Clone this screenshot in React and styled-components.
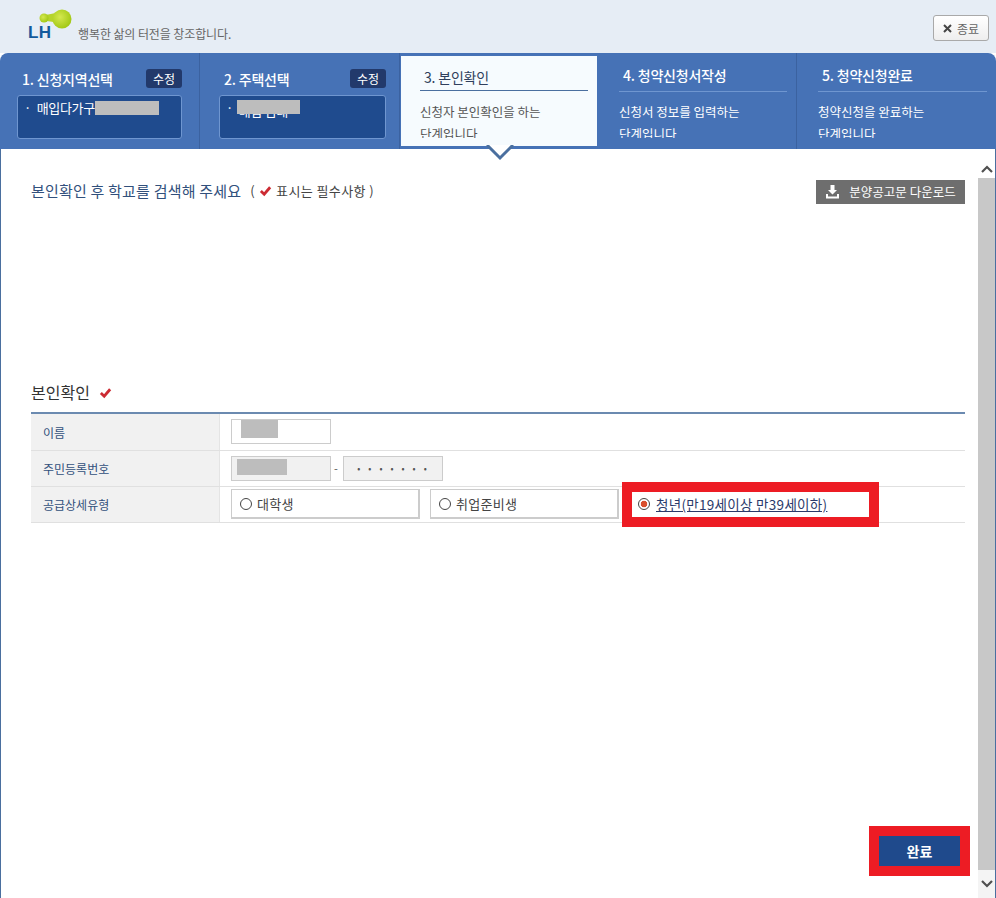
import React from 'react';
import styled, { createGlobalStyle } from 'styled-components';

const GlobalStyle = createGlobalStyle`
    html, body {
        margin: 0;
        padding: 0;
        background: #fff;
        font-family: "Noto Sans CJK KR", "Noto Sans", sans-serif;
    }
    * { box-sizing: border-box; }
`;

const Page = styled.div`
    display: flex;
    flex-direction: column;
    width: 996px;
    height: 898px;
    overflow: hidden;
`;

const Header = styled.header`
    display: flex;
    align-items: flex-start;
    justify-content: space-between;
    height: 53px;
    padding: 9px 7px 0 28px;
    background: #e6edf5;
`;

const Brand = styled.div`
    display: flex;
    align-items: flex-end;
    gap: 5px;
`;

const Logo = styled.div`
    position: relative;
    width: 45px;
    height: 30px;
`;

const LogoText = styled.span`
    position: absolute;
    left: 0;
    bottom: 0;
    font-family: "Liberation Sans", sans-serif;
    font-size: 17px;
    font-weight: 700;
    line-height: 13px;
    letter-spacing: 0.4px;
    color: #135a9c;
`;

const Tagline = styled.span`
    font-size: 12px;
    line-height: 16px;
    letter-spacing: -0.1px;
    color: #666;
    margin-bottom: -3px;
`;

const CloseButton = styled.button`
    display: flex;
    align-items: center;
    justify-content: center;
    gap: 5px;
    width: 56px;
    height: 26px;
    margin-top: 6px;
    padding: 0;
    border: 1px solid #a9a9a9;
    border-radius: 3px;
    background: linear-gradient(#fff, #eee);
    font-family: inherit;
    font-size: 12px;
    color: #666;
`;

const Steps = styled.nav`
    display: grid;
    grid-template-columns: 200px 200px 198px 199px 199px;
    height: 96px;
    background: #4672b6;
    border-radius: 8px 8px 0 0;
    position: relative;
`;

const DoneStep = styled.div`
    padding: 16px ${({ $right }) => $right}px 0 ${({ $left }) => $left}px;
    border-right: 1px solid #3b62a0;
    color: #fff;
`;

const Step = styled.div`
    padding: 12px 9px 0 21px;
    border-right: ${({ $last }) => ($last ? 'none' : '1px solid #3b62a0')};
    color: #fff;
`;

const ActiveStep = styled.div`
    position: relative;
    margin: 3px 1px 3px 1px;
    padding: 11px 9px 0 19px;
    background: #f6fbfe;
    color: #555;
`;

const StepHead = styled.div`
    display: flex;
    align-items: center;
    justify-content: space-between;
    height: 19px;
    padding-left: 5px;
`;

const StepTitle = styled.div`
    font-size: 14px;
    font-weight: ${({ $active }) => ($active ? 400 : 500)};
    line-height: ${({ $flat }) => ($flat ? '18px' : '20px')};
    letter-spacing: -0.2px;
    color: ${({ $active }) => ($active ? '#2f3f5c' : '#fff')};
    padding-left: ${({ $flat }) => ($flat ? '0' : '4px')};
`;

const Rule = styled.div`
    height: 1px;
    margin-top: ${({ $active }) => ($active ? '3px' : '6px')};
    background: ${({ $active }) => ($active ? '#4a6f9f' : '#6f96d0')};
`;

const Desc = styled.p`
    height: 37px;
    margin: ${({ $active }) => ($active ? '10px 0 0' : '9px 0 0')};
    overflow: hidden;
    font-size: 12.5px;
    line-height: 22px;
`;

const EditTag = styled.span`
    display: flex;
    align-items: center;
    justify-content: center;
    width: 36px;
    height: 19px;
    border-radius: 3px;
    background: #22396b;
    font-size: 12px;
    color: #fff;
`;

const ChoiceBox = styled.div`
    position: relative;
    height: 44px;
    margin-top: 7px;
    padding: 3px 0 0 3px;
    overflow: hidden;
    border: 1px solid #6f96d0;
    border-radius: 3px;
    background: #1f4b8e;
    font-size: 13px;
    letter-spacing: -0.3px;
    line-height: 18px;
    color: #fff;
`;

const Bullet = styled.span`
    display: inline-block;
    width: 13px;
    text-align: center;
`;

const ChoiceText = styled.span`
    vertical-align: ${({ $drop }) => ($drop ? '-3px' : 'baseline')};
`;

const Mask = styled.span`
    position: absolute;
    left: ${({ $x }) => $x}px;
    top: ${({ $y }) => $y}px;
    width: ${({ $w }) => $w}px;
    height: ${({ $h }) => $h}px;
    background: #bdbdbd;
`;

const Pointer = styled.svg`
    position: absolute;
    left: 85px;
    bottom: -15px;
    z-index: 2;
`;

const Body = styled.main`
    flex: 1;
    display: flex;
    min-height: 0;
    border-left: 1px solid #4a6f9f;
    border-right: 1px solid #4a6f9f;
`;

const Content = styled.div`
    flex: 1;
    display: flex;
    flex-direction: column;
    min-width: 0;
    padding: 31px 13px 32px 30px;
`;

const TopRow = styled.div`
    display: flex;
    align-items: center;
    justify-content: space-between;
    height: 24px;
`;

const Lead = styled.div`
    display: flex;
    align-items: center;
    margin-bottom: 3px;
    font-size: 15px;
    letter-spacing: 0.2px;
    color: #31507c;
`;

const Required = styled.span`
    display: flex;
    align-items: center;
    gap: 4px;
    margin-left: 9px;
    font-size: 13px;
    letter-spacing: 0.4px;
    color: #444;
`;

const DownloadButton = styled.button`
    display: flex;
    align-items: center;
    justify-content: center;
    gap: 9px;
    width: 149px;
    height: 24px;
    padding: 0 0 1px;
    border: none;
    background: #6e6e6e;
    font-family: inherit;
    font-size: 12.5px;
    color: #fff;
`;

const Section = styled.section`
    margin-top: 176px;
`;

const SectionTitle = styled.h2`
    display: flex;
    align-items: center;
    gap: 9px;
    height: 24px;
    margin: 0 0 8px;
    font-size: 16px;
    font-weight: 400;
    color: #333;
`;

const Table = styled.div`
    border-top: 2px solid #6b8ab0;
`;

const Row = styled.div`
    display: grid;
    grid-template-columns: 189px 1fr;
    height: ${({ $h }) => $h}px;
    border-bottom: 1px solid #e0e0e0;
`;

const Label = styled.div`
    display: flex;
    align-items: center;
    padding-left: 12px;
    background: #f1f1f1;
    border-right: 1px solid #e4e4e4;
    font-size: 12px;
    color: #31507c;
`;

const Cell = styled.div`
    display: flex;
    align-items: center;
    gap: ${({ $gap }) => $gap}px;
    padding: 0 0 1px 11px;
`;

const Field = styled.div`
    position: relative;
    display: flex;
    align-items: center;
    justify-content: center;
    width: 100px;
    height: 25px;
    padding-left: ${({ $dots }) => ($dots ? '6px' : '0')};
    border: 1px solid #ccc;
    background: ${({ $filled }) => ($filled ? '#f1f1f1' : '#fff')};
    font-size: 9px;
    letter-spacing: ${({ $dots }) => ($dots ? '8px' : '0')};
    color: #555;
`;

const Dash = styled.span`
    width: 6px;
    font-size: 11px;
    color: #555;
`;

const RadioOption = styled.label`
    display: flex;
    align-items: center;
    gap: ${({ $marked }) => ($marked ? '6px' : '5px')};
    width: ${({ $w }) => $w}px;
    height: ${({ $marked }) => ($marked ? '25px' : '30px')};
    margin-left: ${({ $marked }) => ($marked ? '3px' : '0')};
    padding-left: ${({ $marked }) => ($marked ? '6px' : '8px')};
    border: ${({ $marked }) => ($marked ? 'none' : '1px solid #ccc')};
    border-right-width: ${({ $marked }) => ($marked ? '0' : '2px')};
    border-bottom-width: ${({ $marked }) => ($marked ? '0' : '2px')};
    outline: ${({ $marked }) => ($marked ? '10px solid #ed1c24' : 'none')};
    background: #fff;
    font-size: ${({ $marked }) => ($marked ? '13.5px' : '13px')};
    letter-spacing: 0.3px;
    color: ${({ $marked }) => ($marked ? '#2a3a6a' : '#444')};
    text-decoration: ${({ $marked }) => ($marked ? 'underline' : 'none')};
`;

const RadioDot = styled.span`
    flex: none;
    width: 12px;
    height: 12px;
    border: 1px solid #444;
    border-radius: 50%;
    background: ${({ $on }) => ($on ? 'radial-gradient(circle, #d9502e 0 3px, #fff 3.6px)' : '#fff')};
`;

const Actions = styled.div`
    display: flex;
    justify-content: flex-end;
    margin-top: auto;
    padding-right: 5px;
`;

const DoneButton = styled.button`
    width: 81px;
    height: 30px;
    padding: 0;
    border: none;
    outline: 10px solid #ed1c24;
    background: #1f4a8c;
    font-family: inherit;
    font-size: 14px;
    font-weight: 700;
    color: #fff;
`;

const Scrollbar = styled.div`
    flex: none;
    display: flex;
    flex-direction: column;
    width: 17px;
    margin-top: 11px;
    background: #f1f1f1;
`;

const ScrollArrow = styled.div`
    display: flex;
    align-items: center;
    justify-content: center;
    height: ${({ $h }) => $h}px;
    background: ${({ $bg }) => $bg};
    color: #505050;
`;

const ScrollThumb = styled.div`
    flex: 1;
    background: #c8c8c8;
`;

const Check = ({ size = 13 }) => (
    <svg width={size} height={size} viewBox="0 0 14 14">
        <path d="M2 7.5 L5.6 11 L12 3.5" fill="none" stroke="#cc2b33" strokeWidth="3" />
    </svg>
);

const steps = [
    { no: 1, title: '1. 신청지역선택', state: 'done', left: 17, right: 17, value: '매입다가구', mask: { x: 77, y: 5, w: 64, h: 14 } },
    { no: 2, title: '2. 주택선택', state: 'done', left: 19, right: 13, value: '매입 임대', drop: true, mask: { x: 17, y: 4, w: 63, h: 14 } },
    { no: 3, title: '3. 본인확인', state: 'active', desc: ['신청자 본인확인을 하는', '단계입니다'] },
    { no: 4, title: '4. 청약신청서작성', state: 'todo', desc: ['신청서 정보를 입력하는', '단계입니다'] },
    { no: 5, title: '5. 청약신청완료', state: 'todo', desc: ['청약신청을 완료하는', '단계입니다'] },
];

const StepItem = ({ step }) => {
    if (step.state === 'done') {
        return (
            <DoneStep $left={step.left} $right={step.right}>
                <StepHead>
                    <StepTitle $flat>{step.title}</StepTitle>
                    <EditTag>수정</EditTag>
                </StepHead>
                <ChoiceBox>
                    <Bullet>·</Bullet> <ChoiceText $drop={step.drop}>{step.value}</ChoiceText>
                    <Mask $x={step.mask.x} $y={step.mask.y} $w={step.mask.w} $h={step.mask.h} />
                </ChoiceBox>
            </DoneStep>
        );
    }
    if (step.state === 'active') {
        return (
            <ActiveStep>
                <StepTitle $active>{step.title}</StepTitle>
                <Rule $active />
                <Desc $active>{step.desc[0]}<br />{step.desc[1]}</Desc>
                <Pointer width="28" height="16" viewBox="0 0 28 16">
                    <path d="M1 0 L14 13 L27 0" fill="#fff" stroke="#4a6f9f" strokeWidth="3" />
                </Pointer>
            </ActiveStep>
        );
    }
    return (
        <Step $last={step.no === 5}>
            <StepTitle>{step.title}</StepTitle>
            <Rule />
            <Desc>{step.desc[0]}<br />{step.desc[1]}</Desc>
        </Step>
    );
};

const App = () => (
    <Page>
        <GlobalStyle />
        <Header>
            <Brand>
                <Logo>
                    <svg width="45" height="30" viewBox="0 0 45 30">
                        <defs>
                            <radialGradient id="ball" cx="0.4" cy="0.4" r="0.7">
                                <stop offset="0" stopColor="#d4e84e" />
                                <stop offset="1" stopColor="#9cc40e" />
                            </radialGradient>
                        </defs>
                        <path d="M16 6 Q25 5 30 3 L30 15 Q25 12 16 12 Z" fill="#b5d42a" />
                        <circle cx="16" cy="9" r="4.5" fill="url(#ball)" />
                        <circle cx="34" cy="10" r="9.5" fill="url(#ball)" />
                    </svg>
                    <LogoText>LH</LogoText>
                </Logo>
                <Tagline>행복한 삶의 터전을 창조합니다.</Tagline>
            </Brand>
            <CloseButton>
                <svg width="9" height="9" viewBox="0 0 9 9">
                    <path d="M1 1 L8 8 M8 1 L1 8" stroke="#444" strokeWidth="2" />
                </svg>
                종료
            </CloseButton>
        </Header>
        <Steps>
            {steps.map((step) => <StepItem key={step.no} step={step} />)}
        </Steps>
        <Body>
            <Content>
                <TopRow>
                    <Lead>
                        본인확인 후 학교를 검색해 주세요
                        <Required>( <Check /> 표시는 필수사항 )</Required>
                    </Lead>
                    <DownloadButton>
                        <svg width="15" height="14" viewBox="0 0 15 14">
                            <path d="M5.5 0 H9.5 V5 H12 L7.5 9.5 L3 5 H5.5 Z M1 9 H3 V11.5 H12 V9 H14 V13.5 H1 Z" fill="#fff" />
                        </svg>
                        분양공고문 다운로드
                    </DownloadButton>
                </TopRow>
                <Section>
                    <SectionTitle>본인확인 <Check /></SectionTitle>
                    <Table>
                        <Row $h={37}>
                            <Label>이름</Label>
                            <Cell $gap={3}>
                                <Field><Mask $x={9} $y={0} $w={37} $h={18} /></Field>
                            </Cell>
                        </Row>
                        <Row $h={36}>
                            <Label>주민등록번호</Label>
                            <Cell $gap={3}>
                                <Field $filled><Mask $x={5} $y={2} $w={50} $h={16} /></Field>
                                <Dash>-</Dash>
                                <Field $filled $dots>•••••••</Field>
                            </Cell>
                        </Row>
                        <Row $h={36}>
                            <Label>공급상세유형</Label>
                            <Cell $gap={10}>
                                <RadioOption $w={189}><RadioDot />대학생</RadioOption>
                                <RadioOption $w={189}><RadioDot />취업준비생</RadioOption>
                                <RadioOption $w={237} $marked><RadioDot $on />청년(만19세이상 만39세이하)</RadioOption>
                            </Cell>
                        </Row>
                    </Table>
                </Section>
                <Actions>
                    <DoneButton>완료</DoneButton>
                </Actions>
            </Content>
            <Scrollbar>
                <ScrollArrow $h={18} $bg="#fff">
                    <svg width="12" height="8" viewBox="0 0 12 8"><path d="M1 7 L6 2 L11 7" fill="none" stroke="currentColor" strokeWidth="2.2" /></svg>
                </ScrollArrow>
                <ScrollThumb />
                <ScrollArrow $h={28} $bg="#f4f4f4">
                    <svg width="12" height="8" viewBox="0 0 12 8"><path d="M1 1 L6 6 L11 1" fill="none" stroke="currentColor" strokeWidth="2.2" /></svg>
                </ScrollArrow>
            </Scrollbar>
        </Body>
    </Page>
);

export default App;
